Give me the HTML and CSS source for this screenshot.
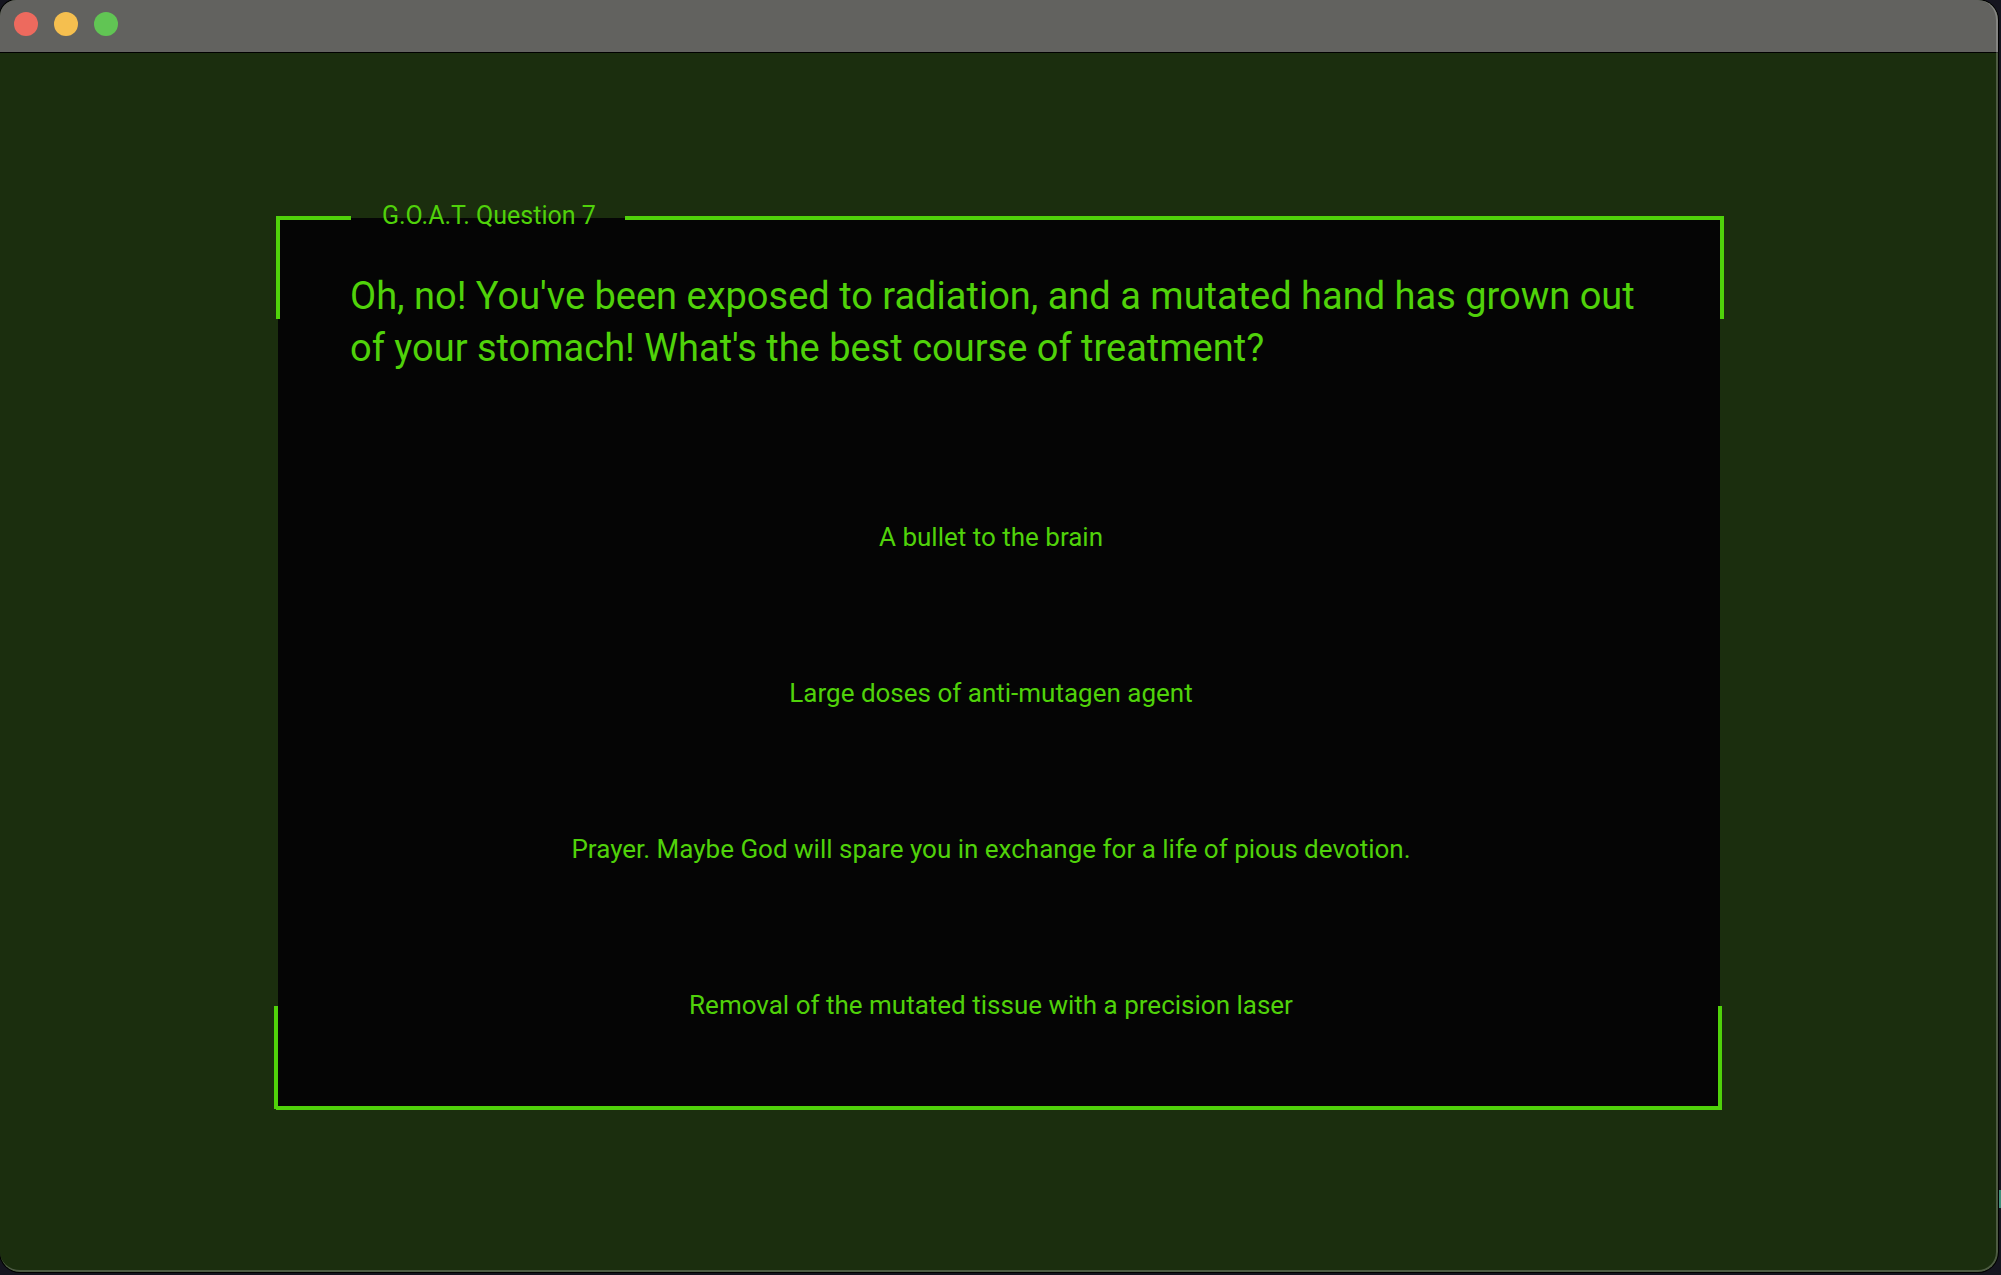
FILE: index.html
```
<!DOCTYPE html>
<html lang="en">
<head>
<meta charset="utf-8">
<meta name="viewport" content="width=device-width, initial-scale=1">
<title>G.O.A.T. Question 7</title>
<link rel="stylesheet" href="styles.css">
</head>
<body>
<div class="window">
  <header class="titlebar">
    <button class="light light-close" type="button" aria-label="Close"></button>
    <button class="light light-minimize" type="button" aria-label="Minimize"></button>
    <button class="light light-zoom" type="button" aria-label="Zoom"></button>
  </header>
  <main class="stage">
    <section class="panel">
      <span class="edge edge-top-left"></span>
      <span class="edge edge-top-right"></span>
      <span class="edge edge-left"></span>
      <span class="edge edge-right"></span>
      <span class="edge edge-bottom"></span>
      <h1 class="panel-title">G.O.A.T. Question 7</h1>
      <p class="question">Oh, no! You've been exposed to radiation, and a mutated hand has grown out of your stomach! What's the best course of treatment?</p>
      <div class="answers">
        <button class="answer" type="button">A bullet to the brain</button>
        <button class="answer" type="button">Large doses of anti-mutagen agent</button>
        <button class="answer" type="button">Prayer. Maybe God will spare you in exchange for a life of pious devotion.</button>
        <button class="answer" type="button">Removal of the mutated tissue with a precision laser</button>
      </div>
    </section>
  </main>
</div>
<span class="desktop-sliver"></span>
</body>
</html>
```
FILE: styles.css
```
:root {
  --glow: #50d20a;
}

* {
  box-sizing: border-box;
}

body {
  margin: 0;
  min-height: 100vh;
  padding: 0 3px 3px 0;
  display: flex;
  background: #15151f;
  color: var(--glow);
  font-family: Roboto, "Liberation Sans", sans-serif;
}

.window {
  position: relative;
  flex: 1;
  display: flex;
  flex-direction: column;
  border-radius: 16px 20px 20px 20px;
  background: #1b2e0e;
  box-shadow: 0 0 0 1px #000;
  overflow: hidden;
}

/* light rim over the title bar and the content alike */
.window::after {
  content: "";
  position: absolute;
  inset: 0;
  border: solid rgba(255, 255, 255, 0.22);
  border-width: 0 2px 2px 0;
  border-radius: inherit;
  pointer-events: none;
}

.titlebar {
  display: flex;
  align-items: center;
  gap: 16px;
  height: 53px;
  padding: 0 14px 4px;
  border-bottom: 1px solid #000;
  background: #62625f;
}

.light {
  width: 24px;
  height: 24px;
  padding: 0;
  border: 0;
  border-radius: 50%;
}

.light-close { background: #ed6a5e; }
.light-minimize { background: #f5bf4f; }
.light-zoom { background: #61c554; }

.stage {
  flex: 1;
  padding: 165px 278px 160px;
}

.panel {
  position: relative;
  display: flow-root;
  padding: 0 72px 25px;
  background: #050505;
}

.edge {
  position: absolute;
  border: 0 solid var(--glow);
}

.edge-top-left {
  top: -2px;
  left: -2px;
  width: 75px;
  height: 103px;
  border-width: 4px 0 0 4px;
}

.edge-top-right {
  top: -2px;
  left: 347px;
  right: -4px;
  height: 103px;
  border-width: 4px 4px 0 0;
}

.edge-left {
  bottom: -1px;
  left: -4px;
  width: 4px;
  height: 103px;
  background: var(--glow);
}

.edge-right {
  bottom: -2px;
  right: -2px;
  width: 4px;
  height: 104px;
  background: var(--glow);
}

.edge-bottom {
  bottom: -2px;
  left: -2px;
  right: -2px;
  height: 4px;
  background: var(--glow);
}

.panel-title {
  height: 20px;
  margin: -20px 0 52px 32px;
  font-size: 25px;
  font-weight: 400;
  line-height: 36px;
}

.question {
  margin: 0;
  font-size: 38px;
  line-height: 52px;
}

.answers {
  display: flex;
  flex-direction: column;
  margin: 85px 16px 0 0;
}

.answer {
  height: 156px;
  padding: 0;
  border: 0;
  background: none;
  color: inherit;
  font: inherit;
  font-size: 26px;
  cursor: pointer;
}

.desktop-sliver {
  position: absolute;
  top: 1190px;
  right: 0;
  width: 2px;
  height: 18px;
  background: #3f8f7a;
}
```
